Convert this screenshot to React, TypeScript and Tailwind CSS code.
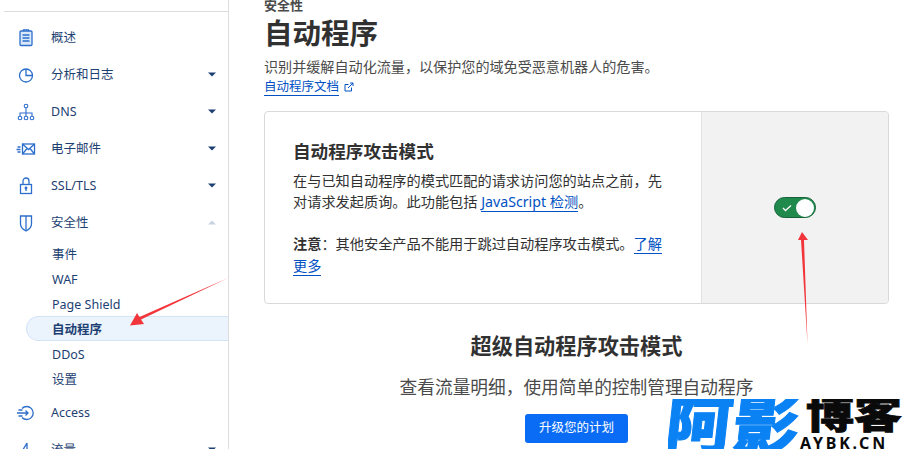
import type { ReactNode } from "react";

const Caret = ({ up = false }: { up?: boolean }) => (
  <svg width="8" height="5" viewBox="0 0 8 5" className={up ? "text-[#c9d3e0]" : "text-[#1d3f72]"}>
    <path d={up ? "M0 4.500 L4 0.500 L8 4.500 Z" : "M0 0.500 L8 0.500 L4 4.500 Z"} fill="currentColor" />
  </svg>
);

const iconProps = {
  width: 20,
  height: 20,
  viewBox: "0 0 20 20",
  fill: "none",
  stroke: "#2c6ecb",
  strokeWidth: 1.3,
};

const icons: Record<string, ReactNode> = {
  overview: (
    <svg {...iconProps}>
      <rect x="4" y="3" width="12" height="14.5" rx="1" fill="#dbe8fa" />
      <path d="M7.500 3V1.800h5V3M6.500 7h7M6.500 10h7M6.500 13h7" />
    </svg>
  ),
  chart: (
    <svg {...iconProps}>
      <circle cx="10" cy="10.500" r="6.500" />
      <path d="M10 4v6.500h6.500" />
    </svg>
  ),
  dns: (
    <svg {...iconProps} strokeWidth={1.1}>
      <circle cx="10" cy="4" r="1.800" />
      <circle cx="4" cy="16" r="1.800" />
      <circle cx="10" cy="16" r="1.800" />
      <circle cx="16" cy="16" r="1.800" />
      <path d="M10 6v8M4 14v-3h12v3" />
    </svg>
  ),
  mail: (
    <svg {...iconProps}>
      <rect x="6.500" y="5" width="12" height="10" />
      <path d="M6.500 5l6 5.500 6-5.500M6.500 15l4.500-5.500M18.500 15L14 9.500M1.500 8h3M0.500 10.500h4M1.500 13h3" />
    </svg>
  ),
  lock: (
    <svg {...iconProps}>
      <rect x="4.500" y="8.500" width="11" height="9" />
      <path d="M7 8.500V5a3 3 0 0 1 6 0v3.500M10 12v3" />
      <circle cx="10" cy="12" r="0.800" fill="#2c6ecb" />
    </svg>
  ),
  shield: (
    <svg {...iconProps}>
      <path d="M4.500 3h11v8c0 3-2.500 5.500-5.500 7-3-1.500-5.500-4-5.500-7z" />
      <path d="M10 3v15" />
    </svg>
  ),
  access: (
    <svg {...iconProps}>
      <path d="M6 5.500a6.500 6.500 0 1 1 0 9" />
      <path d="M1 10h11M9.500 7.500L12 10l-2.500 2.500M2.500 7h4M2.500 13h4" />
    </svg>
  ),
  speed: (
    <svg {...iconProps}>
      <path d="M11 3L5 13h10M11 3v14" />
    </svg>
  ),
};

const NavRow = ({ icon, label, caret, up }: { icon: string; label: string; caret?: boolean; up?: boolean }) => (
  <div className="flex h-[37px] shrink-0 items-center pr-[12px] pl-[16px] text-[12.500px] text-[#1d3f72]">
    <span className="flex w-[35px] shrink-0">{icons[icon]}</span>
    <span className="flex-1 pt-[2px]">{label}</span>
    {caret && <Caret up={up} />}
  </div>
);

const SubRow = ({ label, active }: { label: string; active?: boolean }) =>
  active ? (
    <div className="ml-[26px] flex h-[25px] shrink-0 items-center rounded-l-full border border-r-0 border-[#d3e3f8] bg-[#ebf3fd] pt-[3px] pl-[25px] text-[12.500px] font-bold text-[#1d3f72]">
      {label}
    </div>
  ) : (
    <div className="flex h-[25px] shrink-0 items-center pt-[3px] pl-[52px] text-[12.500px] text-[#1d3f72]">{label}</div>
  );

export default function App() {
  return (
    <div className="relative h-[449px] w-[923px] overflow-hidden bg-white font-['Noto_Sans','Noto_Sans_CJK_SC',sans-serif]">
      <div className="flex h-full">
        {/* 侧边栏 */}
        <aside className="flex h-full w-[229px] shrink-0 flex-col overflow-hidden border-r border-[#dcdcdc]">
          <div className="mt-[11px] ml-[4px] h-px shrink-0 bg-[#dcdcdc]" />
          <div className="mt-[7px] flex flex-col">
            <NavRow icon="overview" label="概述" />
            <NavRow icon="chart" label="分析和日志" caret />
            <NavRow icon="dns" label="DNS" caret />
            <NavRow icon="mail" label="电子邮件" caret />
            <NavRow icon="lock" label="SSL/TLS" caret />
            <NavRow icon="shield" label="安全性" caret up />
          </div>
          <div className="flex flex-col">
            <SubRow label="事件" />
            <SubRow label="WAF" />
            <SubRow label="Page Shield" />
            <SubRow label="自动程序" active />
            <SubRow label="DDoS" />
            <SubRow label="设置" />
          </div>
          <div className="mt-[3px] flex flex-col">
            <NavRow icon="access" label="Access" />
            <NavRow icon="speed" label="流量" caret />
          </div>
        </aside>

        {/* 主内容 */}
        <main className="min-w-0 flex-1 pl-[35px] text-[#313131]">
          <div className="-mt-[4px] h-[18px] text-[13px] leading-[18px] font-bold text-[#4a4a4a]">安全性</div>
          <h1 className="h-[38px] text-[28.500px] leading-[38px] font-bold">自动程序</h1>
          <p className="mt-[5px] h-[20px] text-[14.100px] leading-[20px] text-[#4a4a4a]">
            识别并缓解自动化流量，以保护您的域免受恶意机器人的危害。
          </p>
          <div className="flex h-[20px] items-center gap-[5px] text-[#0051c3]">
            <a className="border-b border-[#0051c3] text-[12.500px] leading-[17px]">自动程序文档</a>
            <svg width="10" height="10" viewBox="0 0 10 10" fill="none" stroke="currentColor" strokeWidth="1">
              <path d="M7.500 5.500V9H1V2.500h3.500M4 6l5-5M6 1h3v3" />
            </svg>
          </div>

          <section className="mt-[14px] flex h-[193px] w-[625px] overflow-hidden rounded-[4px] border border-[#d9d9d9]">
            <div className="flex-1 pt-[27px] pl-[28px]">
              <h2 className="text-[17.600px] leading-[24px] font-bold">自动程序攻击模式</h2>
              <p className="mt-[7px] w-[378px] text-[14.200px] leading-[21px] text-[#313131]">
                在与已知自动程序的模式匹配的请求访问您的站点之前，先对请求发起质询。此功能包括{" "}
                <a className="border-b border-[#0051c3] text-[#0051c3]">JavaScript 检测</a>。
              </p>
              <p className="mt-[21px] w-[378px] text-[14.200px] leading-[21.500px] text-[#313131]">
                <b>注意</b>：其他安全产品不能用于跳过自动程序攻击模式。
                <a className="border-b border-[#0051c3] text-[#0051c3]">了解更多</a>
              </p>
            </div>
            <div className="flex w-[187px] shrink-0 items-center justify-center border-l border-[#e0e0e0] bg-[#f2f2f2]">
              <div className="flex h-[21px] w-[42px] items-center justify-between rounded-full border border-[#14633a] bg-[#1f8a4c] pr-px pl-[7px]">
                <svg width="10" height="8" viewBox="0 0 10 8" fill="none" stroke="white" strokeWidth="1.300">
                  <path d="M1 4l2.500 2.500L9 1.500" />
                </svg>
                <span className="h-[18px] w-[18px] rounded-full bg-white" />
              </div>
            </div>
          </section>

          <section className="mt-[27px] flex w-[625px] flex-col items-center">
            <h2 className="text-[21.200px] leading-[30px] font-bold">超级自动程序攻击模式</h2>
            <p className="mt-[13px] text-[17.700px] leading-[26px] text-[#4a4a4a]">查看流量明细，使用简单的控制管理自动程序</p>
            <button className="mt-[14px] h-[29px] w-[103px] rounded-[3px] bg-[#0a6cf5] text-[12.500px] text-white">升级您的计划</button>
          </section>
        </main>
      </div>

      {/* 标注箭头 */}
      <svg width="923" height="449" className="pointer-events-none absolute top-0 left-0">
        <polygon points="228,278 141,319.500 144,324 130,325.500 137,313 139.500,317" fill="#f2353a" />
        <polygon points="807.500,344 804,240 808,240 802,232 798,240 801,240" fill="#f2353a" />
      </svg>

      {/* 水印 */}
      <div className="absolute top-[399px] left-[668px] h-[50px] w-[240px] overflow-hidden">
        <span className="absolute top-[-12px] left-[2px] origin-top-left scale-x-[1.04] scale-y-[0.98] -skew-x-6 text-[64px] leading-[76px] font-black tracking-[1px] whitespace-nowrap text-[#0b82f4] [-webkit-text-stroke:1px_#0b82f4]">
          阿影
        </span>
        <span className="absolute top-[-9px] left-[138px] origin-top-left scale-y-[0.8] text-[48px] leading-[60px] font-black whitespace-nowrap text-[#0a0a0a] [-webkit-text-stroke:1px_#0a0a0a]">
          博客
        </span>
        <span className="absolute top-[35px] left-[132px] text-[16px] leading-[18px] font-bold tracking-[2.800px] whitespace-nowrap text-[#0a0a0a]">
          AYBK.CN
        </span>
      </div>
    </div>
  );
}
